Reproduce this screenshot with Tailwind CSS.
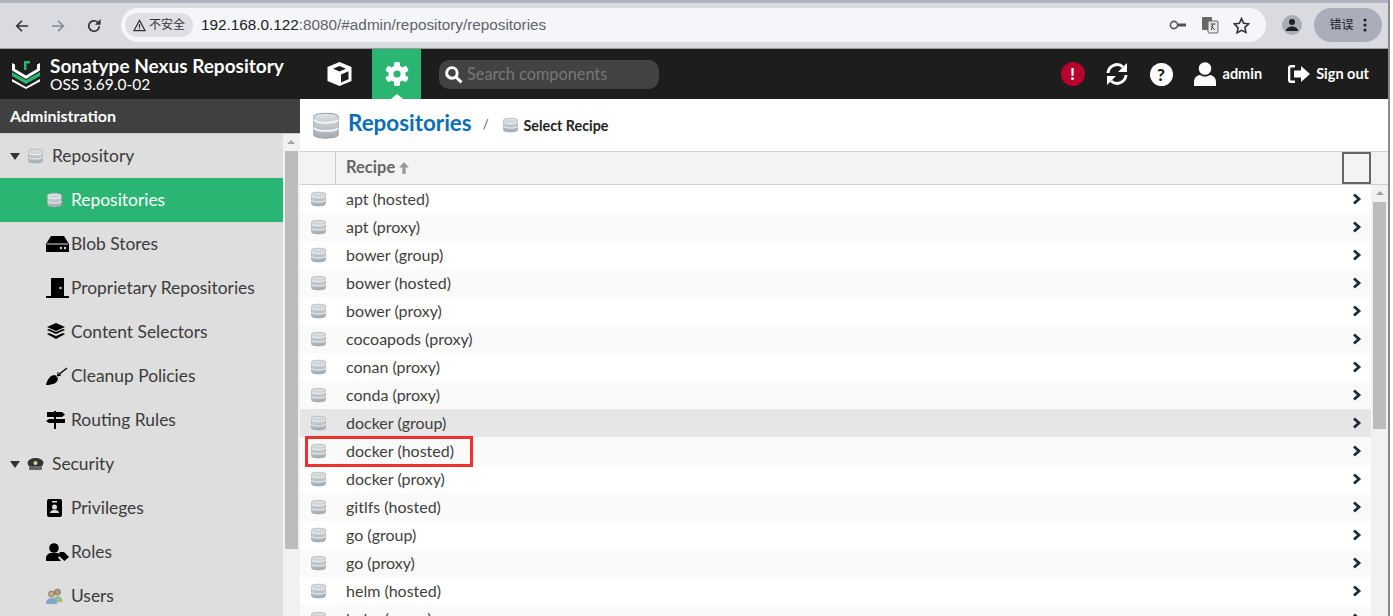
<!DOCTYPE html>
<html><head><meta charset="utf-8"><title>Repositories</title>
<script src="https://cdn.jsdelivr.net/npm/@tailwindcss/browser@4"></script></head>
<body class="h-[616px] w-[1393px] overflow-hidden bg-white font-['Lato','Noto_Sans_CJK_SC',sans-serif] text-[#333]">
<svg class="absolute h-0 w-0"><defs>
<linearGradient id="dbg" x1="0" y1="0" x2="0" y2="1"><stop offset="0" stop-color="#dfe3e6"/><stop offset="1" stop-color="#a4abb1"/></linearGradient>
<symbol id="db" viewBox="0 0 16 16" preserveAspectRatio="none"><path fill="url(#dbg)" stroke="#9aa1a6" stroke-width=".6" d="M.5 3C.5 .6 15.500 .6 15.500 3V13C15.500 15.600 .5 15.600 .5 13Z"/><path fill="none" stroke="#f4f5f6" stroke-width="1" d="M.5 5C3 7 13 7 15.500 5M.5 9.500C3 11.500 13 11.500 15.500 9.500"/></symbol>
<symbol id="chev" viewBox="0 0 10 12"><path fill="none" stroke="#1c2a3a" stroke-width="2.800" d="M2 1.500L7 6L2 10.500"/></symbol>
</defs></svg>

<div class="h-[616px] w-[1390px] border-r-2 border-[#8a8a8a]">
<!-- browser chrome -->
<div class="relative flex h-[49px] border-b border-[#9a9a9a] bg-[#d9dbe1]">
  <div class="absolute left-0 top-0 h-[3px] w-full bg-[#b0b4c0]"></div>
  <div class="flex w-[121px] items-center gap-[22px] pl-[15px] pt-[3px]">
    <svg class="size-[14px]" viewBox="0 0 16 16" fill="none" stroke="#333" stroke-width="1.900"><path d="M15 8H2M8 2L2 8l6 6"/></svg>
    <svg class="size-[14px]" viewBox="0 0 16 16" fill="none" stroke="#858a90" stroke-width="1.900"><path d="M1 8h13M8 2l6 6-6 6"/></svg>
    <svg class="size-[14px]" viewBox="0 0 16 16" fill="none" stroke="#333" stroke-width="1.900"><path d="M14 8A6 6 0 1 1 12 3.500"/><path fill="#333" stroke="none" d="M9 6.500h6.500V0z"/></svg>
  </div>
  <div class="mt-[8px] flex h-[34px] w-[1145px] items-center rounded-full bg-[#f5f6f9] pl-[4px] pr-[16px]">
    <div class="flex h-6 w-[68px] items-center justify-center gap-[3px] rounded-full bg-[#dfe0e5] text-[12px] text-[#333]">
      <svg class="size-[13px]" viewBox="0 0 14 14" fill="none" stroke="#333" stroke-width="1.300"><path d="M7 1.500L13 12.500H1Z"/><path d="M7 5.500v4M7 10.200v1"/></svg><span>不安全</span>
    </div>
    <div class="ml-[8px] font-['Liberation_Sans',sans-serif] text-[15.300px] text-[#5f6368]"><span class="text-[#202124]">192.168.0.122</span>:8080/#admin/repository/repositories</div>
    <div class="ml-auto flex items-center gap-[14px]">
      <svg class="h-[12px] w-[18px]" viewBox="0 0 18 12" fill="none" stroke="#555" stroke-width="1.600"><circle cx="5" cy="6" r="3.600"/><path stroke-width="3" d="M9 6h8"/></svg>
      <svg class="h-[18px] w-[18px]" viewBox="0 0 18 18"><rect x="1" y="1" width="10" height="13" rx="1" fill="#666"/><rect x="7" y="5" width="10" height="12" rx="1" fill="#e8e8e8" stroke="#666"/><path d="M9.500 8h5M12 8l-1.500 6M10 10l4 4" stroke="#444" fill="none"/></svg>
      <svg class="h-[17px] w-[17px]" viewBox="0 0 16 16" fill="none" stroke="#333" stroke-width="1.500"><path d="M8 1.500l2 4.500 4.800.5-3.600 3.200 1 4.700L8 12.500l-4.200 2.400 1-4.700L1.200 6.500 6 6Z"/></svg>
    </div>
  </div>
  <div class="ml-[16px] mt-[15px] flex size-5 items-center justify-center rounded-full bg-[#a9adb8]">
    <svg class="size-[14px]" viewBox="0 0 14 14" fill="#202124"><circle cx="7" cy="4" r="3"/><path d="M1 13c0-3 3-4.500 6-4.500s6 1.500 6 4.500z"/></svg>
  </div>
  <div class="ml-[12px] mt-[8px] flex h-[34px] w-[68px] items-center justify-center gap-[9px] rounded-full bg-[#aaaeba] text-[12px] text-[#202124]">
    <span>错误</span>
    <svg class="h-[14px] w-[4px]" viewBox="0 0 4 14" fill="#202124"><circle cx="2" cy="2" r="1.600"/><circle cx="2" cy="7" r="1.600"/><circle cx="2" cy="12" r="1.600"/></svg>
  </div>
</div>

<div class="flex h-[567px] w-[1388px] flex-col">
<!-- nexus header -->
<div class="flex h-[50px] shrink-0 items-center bg-[#1d1d1d] text-white">
  <svg class="ml-[12px] h-[30px] w-[28px]" viewBox="0 0 28 30"><path fill="#fff" d="M0 4l3 1.500V10l11 6.500L25 10V5.500L28 4v7.500L14 20 0 11.500Z"/><path fill="#2ab56f" d="M0 13l14 8 14-8v4l-14 8-14-8z"/><path fill="#fff" d="M0 20l14 8 14-8v2.500L14 30 0 22.500z"/><path fill="#2ab56f" d="M12 2h6v2.500h-3.500V11H12z"/></svg>
  <div class="ml-[10px] w-[277px]">
    <div class="text-[19px] font-bold leading-[20px]">Sonatype Nexus Repository</div>
    <div class="text-[15.500px] leading-[17px]">OSS 3.69.0-02</div>
  </div>
  <svg class="h-[24px] w-[25px]" viewBox="0 0 25 24"><path fill="#fff" d="M12.500 0l12 5v14l-12 5-12-5V5z"/><path fill="#1d1d1d" d="M12.500 4l6.500 2.700-6.500 2.800L6 6.700z"/><path fill="#1d1d1d" d="M14 12.500l7.500-3.200v8l-7.500 3.200z"/></svg>
  <div class="relative ml-[20px] flex h-[50px] w-[49px] items-center justify-center bg-[#2ab573]">
    <svg class="size-[24px]" viewBox="0 0 24 24" fill="#fff"><circle cx="12" cy="12" r="8.500"/><g><rect x="9" y="0" width="6" height="24" rx="1.500"/><rect x="9" y="0" width="6" height="24" rx="1.500" transform="rotate(60 12 12)"/><rect x="9" y="0" width="6" height="24" rx="1.500" transform="rotate(120 12 12)"/></g><circle cx="12" cy="12" r="3.600" fill="#2ab573"/></svg>
    <div class="absolute bottom-0 left-[19px] size-0 border-x-[6px] border-b-[5px] border-x-transparent border-b-white"></div>
  </div>
  <div class="ml-[18px] flex h-[29px] w-[220px] items-center gap-[4px] rounded-[10px] bg-[#424242] pl-[5px] text-[16.300px] text-[#777]">
    <svg class="size-[19px]" viewBox="0 0 18 18" fill="none" stroke="#fff" stroke-width="2.800"><circle cx="7.500" cy="7.500" r="5"/><path d="M11.500 11.500l5 5"/></svg><span>Search components</span>
  </div>
  <div class="ml-auto flex items-center">
    <div class="flex size-6 items-center justify-center rounded-full bg-[#b8002f] text-[16px] font-black leading-none">!</div>
    <svg class="ml-[20px] size-[24px]" viewBox="0 0 24 24" fill="none" stroke="#fff" stroke-width="3"><path d="M3 11a9 9 0 0 1 15-6"/><path fill="#fff" stroke="none" d="M22 1v9h-9z"/><path d="M21 13a9 9 0 0 1-15 6"/><path fill="#fff" stroke="none" d="M2 23v-9h9z"/></svg>
    <div class="ml-[21px] flex size-[23px] items-center justify-center rounded-full bg-white text-[17px] font-black leading-none text-[#1d1d1d]">?</div>
    <svg class="ml-[21px] h-6 w-[22px]" viewBox="0 0 22 24" fill="#fff"><circle cx="11" cy="6.500" r="6.300"/><path d="M0 24v-4c0-5 4-7 6-7 1 .8 3 1.500 5 1.500s4-.7 5-1.500c2 0 6 2 6 7v4z"/></svg>
    <span class="ml-[7px] text-[14.500px] font-bold">admin</span>
    <svg class="ml-[26px] h-[18px] w-[22px]" viewBox="0 0 22 18" fill="#fff"><path d="M7 0v2.500H3a.7.7 0 0 0-.7.700v11.600a.7.7 0 0 0 .7.700h4V18H3a3 3 0 0 1-3-3V3a3 3 0 0 1 3-3z"/><path d="M13 1l9 8-9 8v-4.500H6v-7h7z"/></svg>
    <span class="ml-[6px] mr-[19px] text-[14.500px] font-bold">Sign out</span>
  </div>
</div>

<div class="flex min-h-0 flex-1">
<!-- sidebar -->
<div class="flex w-[300px] shrink-0 flex-col">
  <div class="h-[35px] shrink-0 border-b border-[#c8c8c8] bg-[#404040] pl-[10px] pt-[7px] text-[16px] font-bold leading-[20px] text-white">Administration</div>
  <div class="flex min-h-0 flex-1">
    <div class="w-[283px] bg-[#dedede] text-[17.400px] text-[#3b3b3b]">
      <div class="flex h-[44px] items-center pl-[10px]">
        <div class="size-0 border-x-[5px] border-t-[7px] border-x-transparent border-t-[#333]"></div>
        <svg class="ml-[8px] h-[16px] w-[15px]"><use href="#db"/></svg><span class="ml-[9px]">Repository</span>
      </div>
      <div class="flex h-[44px] items-center bg-[#2ab573] pl-[47px] text-white"><svg class="h-[16px] w-[15px]"><use href="#db"/></svg><span class="ml-[9px]">Repositories</span></div>
      <div class="flex h-[44px] items-center pl-[46px]"><svg class="h-[16px] w-[23px]" viewBox="0 0 23 16" fill="#000"><path d="M5 0h13l5 8v8H0V8z"/><path d="M1 8h21" stroke="#dedede" stroke-width="1"/><circle cx="15" cy="12" r="1.200" fill="#dedede"/><circle cx="19" cy="12" r="1.200" fill="#dedede"/></svg><span class="ml-[2px]">Blob Stores</span></div>
      <div class="flex h-[44px] items-center pl-[46px]"><svg class="h-[20px] w-[23px]" viewBox="0 0 23 20"><path fill="#000" d="M5 0h13v18h5v2H0v-2h5z"/><circle cx="14.500" cy="10" r="1.200" fill="#dedede"/></svg><span class="ml-[2px]">Proprietary Repositories</span></div>
      <div class="flex h-[44px] items-center pl-[46px]"><svg class="h-[18px] w-[23px]" viewBox="0 0 23 18" fill="#000"><path d="M10 0l9 4-9 4-9-4z"/><path d="M1 7l2-1 7 3 7-3 2 1-9 4z"/><path d="M1 11l2-1 7 3 7-3 2 1-9 5z"/></svg><span class="ml-[2px]">Content Selectors</span></div>
      <div class="flex h-[44px] items-center pl-[46px]"><svg class="h-[18px] w-[23px]" viewBox="0 0 23 18" fill="#000"><path d="M0 18C1 13 4 8 9 8l3 3c0 5-5 7-12 7z"/><path d="M11 9l10-8" stroke="#000" stroke-width="1.500"/><path d="M12 5v4l3-1" stroke="#000" fill="none"/></svg><span class="ml-[2px]">Cleanup Policies</span></div>
      <div class="flex h-[44px] items-center pl-[46px]"><svg class="h-[18px] w-[23px]" viewBox="0 0 23 18" fill="#000"><path d="M1 1h15l3 2.500-3 2.500H1zM3 8h16v4H3l-3-2zM8 0h2v18H8z"/></svg><span class="ml-[2px]">Routing Rules</span></div>
      <div class="flex h-[44px] items-center pl-[10px]">
        <div class="size-0 border-x-[5px] border-t-[7px] border-x-transparent border-t-[#333]"></div>
        <svg class="ml-[7px] h-[13px] w-[17px]" viewBox="0 0 17 13"><ellipse cx="8.500" cy="5" rx="8" ry="5" fill="#333"/><rect x="2" y="8" width="13" height="4" rx="1" fill="#666"/><circle cx="8.500" cy="5" r="2" fill="#d8d2a0"/></svg><span class="ml-[8px]">Security</span>
      </div>
      <div class="flex h-[44px] items-center pl-[47px]"><svg class="h-[18px] w-[15px]" viewBox="0 0 15 18"><rect width="15" height="18" rx="2" fill="#000"/><circle cx="7.500" cy="8" r="2.500" fill="#dedede"/><path d="M3 14c0-2 2-3 4.500-3s4.500 1 4.500 3z" fill="#dedede"/><rect x="5" y="2" width="5" height="1.500" fill="#dedede"/></svg><span class="ml-[9px]">Privileges</span></div>
      <div class="flex h-[44px] items-center pl-[46px]"><svg class="h-[18px] w-[23px]" viewBox="0 0 23 18" fill="#000"><circle cx="8" cy="5" r="4.800"/><path d="M0 18v-3c0-3 3-5 5-5h6c1.500 0 3 .8 3.500 2L12 14.500l3 3.500z"/><path d="M17 9h1l5 5-4.500 4-5-4.500V9z"/></svg><span class="ml-[2px]">Roles</span></div>
      <div class="flex h-[44px] items-center pl-[46px]"><svg class="h-[16px] w-[17px]" viewBox="0 0 17 16"><circle cx="11.500" cy="4" r="3" fill="#b59a76" stroke="#555" stroke-width=".6"/><path d="M7 14c0-4 2-6 4.500-6s5 2 5 6z" fill="#9cbc83"/><circle cx="5.500" cy="6" r="3" fill="#c7a888" stroke="#555" stroke-width=".6"/><path d="M0 16c0-4 2-6 5.500-6s5.500 2 5.500 6z" fill="#7fa6cf"/></svg><span class="ml-[8px]">Users</span></div>
    </div>
    <div class="relative flex-1 bg-[#f1f1f1]">
      <div class="absolute left-[4px] top-[6px] size-0 border-x-[4px] border-b-[4px] border-x-transparent border-b-[#a3a3a3]"></div>
      <div class="ml-[2px] mt-[17px] h-[398px] w-[13px] bg-[#bcbcbc]"></div>
    </div>
  </div>
</div>

<!-- main -->
<div class="flex min-w-0 flex-1 flex-col">
  <div class="flex h-[52px] shrink-0 items-center pl-[13px]">
    <svg class="h-[29px] w-[26px]"><use href="#db"/></svg>
    <span class="ml-[9px] pb-[4px] text-[22.400px] font-bold leading-none text-[#0d6eb8]">Repositories</span>
    <span class="ml-[11px] text-[13px] text-[#555]">/</span>
    <svg class="ml-[14px] h-[16px] w-[15px]"><use href="#db"/></svg>
    <span class="ml-[6px] pt-[2px] text-[14.300px] font-bold text-[#222]">Select Recipe</span>
  </div>
  <div class="flex h-[34px] shrink-0 border-y border-[#cfcfcf] bg-[#f3f3f3]">
    <div class="w-[36px] border-r border-[#cfcfcf]"></div>
    <div class="flex flex-1 items-center pb-[1px] pl-[10px] text-[16.500px] font-bold text-[#666]">Recipe <svg class="ml-[4px] h-[12px] w-[10px]" viewBox="0 0 9 11" fill="#999"><path d="M4.500 0L9 5H6v6H3V5H0z"/></svg></div>
    <div class="mr-[17px] h-[32px] w-[29px] border-2 border-[#666]"></div>
  </div>
  <div class="relative min-h-0 flex-1 overflow-hidden pr-[17px]">
    <div class="absolute right-0 top-0 h-full w-[17px] bg-[#f1f1f1]">
      <div class="absolute left-[5px] top-[6px] size-0 border-x-[4px] border-b-[4px] border-x-transparent border-b-[#a3a3a3]"></div>
      <div class="ml-[2px] mt-[17px] h-[227px] w-[13px] bg-[#bcbcbc]"></div>
    </div>
    <div class="text-[16px] text-[#3f3f3f] [&_span]:pb-[1px]">
      <div class="flex h-[28px] items-center bg-white"><svg class="ml-[11px] h-[16px] w-[15px]"><use href="#db"/></svg><span class="ml-[20px]">apt (hosted)</span><svg class="ml-auto mr-[9px] h-[12px] w-[10px]"><use href="#chev"/></svg></div>
      <div class="flex h-[28px] items-center bg-[#fafafa]"><svg class="ml-[11px] h-[16px] w-[15px]"><use href="#db"/></svg><span class="ml-[20px]">apt (proxy)</span><svg class="ml-auto mr-[9px] h-[12px] w-[10px]"><use href="#chev"/></svg></div>
      <div class="flex h-[28px] items-center bg-white"><svg class="ml-[11px] h-[16px] w-[15px]"><use href="#db"/></svg><span class="ml-[20px]">bower (group)</span><svg class="ml-auto mr-[9px] h-[12px] w-[10px]"><use href="#chev"/></svg></div>
      <div class="flex h-[28px] items-center bg-[#fafafa]"><svg class="ml-[11px] h-[16px] w-[15px]"><use href="#db"/></svg><span class="ml-[20px]">bower (hosted)</span><svg class="ml-auto mr-[9px] h-[12px] w-[10px]"><use href="#chev"/></svg></div>
      <div class="flex h-[28px] items-center bg-white"><svg class="ml-[11px] h-[16px] w-[15px]"><use href="#db"/></svg><span class="ml-[20px]">bower (proxy)</span><svg class="ml-auto mr-[9px] h-[12px] w-[10px]"><use href="#chev"/></svg></div>
      <div class="flex h-[28px] items-center bg-[#fafafa]"><svg class="ml-[11px] h-[16px] w-[15px]"><use href="#db"/></svg><span class="ml-[20px]">cocoapods (proxy)</span><svg class="ml-auto mr-[9px] h-[12px] w-[10px]"><use href="#chev"/></svg></div>
      <div class="flex h-[28px] items-center bg-white"><svg class="ml-[11px] h-[16px] w-[15px]"><use href="#db"/></svg><span class="ml-[20px]">conan (proxy)</span><svg class="ml-auto mr-[9px] h-[12px] w-[10px]"><use href="#chev"/></svg></div>
      <div class="flex h-[28px] items-center bg-[#fafafa]"><svg class="ml-[11px] h-[16px] w-[15px]"><use href="#db"/></svg><span class="ml-[20px]">conda (proxy)</span><svg class="ml-auto mr-[9px] h-[12px] w-[10px]"><use href="#chev"/></svg></div>
      <div class="flex h-[28px] items-center bg-[#e6e6e6]"><svg class="ml-[11px] h-[16px] w-[15px]"><use href="#db"/></svg><span class="ml-[20px]">docker (group)</span><svg class="ml-auto mr-[9px] h-[12px] w-[10px]"><use href="#chev"/></svg></div>
      <div class="flex h-[28px] items-center bg-[#fafafa]"><svg class="ml-[11px] h-[16px] w-[15px]"><use href="#db"/></svg><span class="ml-[20px]">docker (hosted)</span><svg class="ml-auto mr-[9px] h-[12px] w-[10px]"><use href="#chev"/></svg></div>
      <div class="flex h-[28px] items-center bg-white"><svg class="ml-[11px] h-[16px] w-[15px]"><use href="#db"/></svg><span class="ml-[20px]">docker (proxy)</span><svg class="ml-auto mr-[9px] h-[12px] w-[10px]"><use href="#chev"/></svg></div>
      <div class="flex h-[28px] items-center bg-[#fafafa]"><svg class="ml-[11px] h-[16px] w-[15px]"><use href="#db"/></svg><span class="ml-[20px]">gitlfs (hosted)</span><svg class="ml-auto mr-[9px] h-[12px] w-[10px]"><use href="#chev"/></svg></div>
      <div class="flex h-[28px] items-center bg-white"><svg class="ml-[11px] h-[16px] w-[15px]"><use href="#db"/></svg><span class="ml-[20px]">go (group)</span><svg class="ml-auto mr-[9px] h-[12px] w-[10px]"><use href="#chev"/></svg></div>
      <div class="flex h-[28px] items-center bg-[#fafafa]"><svg class="ml-[11px] h-[16px] w-[15px]"><use href="#db"/></svg><span class="ml-[20px]">go (proxy)</span><svg class="ml-auto mr-[9px] h-[12px] w-[10px]"><use href="#chev"/></svg></div>
      <div class="flex h-[28px] items-center bg-white"><svg class="ml-[11px] h-[16px] w-[15px]"><use href="#db"/></svg><span class="ml-[20px]">helm (hosted)</span><svg class="ml-auto mr-[9px] h-[12px] w-[10px]"><use href="#chev"/></svg></div>
      <div class="flex h-[28px] items-center bg-[#fafafa]"><svg class="ml-[11px] h-[16px] w-[15px]"><use href="#db"/></svg><span class="ml-[20px]">helm (proxy)</span><svg class="ml-auto mr-[9px] h-[12px] w-[10px]"><use href="#chev"/></svg></div>
    </div>
    <div class="absolute left-[5px] top-[251px] h-[31px] w-[168px] border-[3px] border-[#f03030]"></div>
  </div>
</div>
</div>
</div>
</div>
</body></html>
